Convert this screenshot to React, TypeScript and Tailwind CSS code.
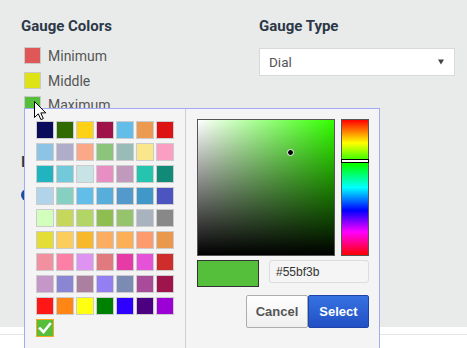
import React from 'react';

const palette: string[] = [
  '#0b0b5c', '#316b00', '#fdd116', '#a0134a', '#62bee9', '#ec9a4f', '#dd1212',
  '#8dc3e4', '#b0adca', '#fba888', '#8cc47b', '#9abcb9', '#fae78c', '#fa9fc1',
  '#21b4c0', '#72c9da', '#c8e3e6', '#e78ec3', '#c199bd', '#25c4ae', '#128a78',
  '#b1d4ea', '#86d0c2', '#63bde9', '#58aedb', '#5399cc', '#3f98c8', '#4c55bf',
  '#d3ffbc', '#c6d85b', '#b2d665', '#8ebe4f', '#95c46d', '#a8b3bf', '#888888',
  '#e3dd35', '#fccd5b', '#f7b92b', '#fdad62', '#fcaf55', '#fd9a6e', '#ea984c',
  '#f1909f', '#fc80a6', '#de93f1', '#e07a7e', '#e63ba6', '#e652d7', '#cf2c2c',
  '#c597c8', '#8b86d3', '#aa7fa0', '#937ff2', '#7b8bb3', '#a84b98', '#a0144c',
  '#ff1717', '#ff8514', '#ffff12', '#008000', '#2d00ff', '#4b0081', '#9b00d4',
];

const gaugeColors = [
  { label: 'Minimum', color: '#e05757' },
  { label: 'Middle', color: '#dee316' },
  { label: 'Maximum', color: '#55bf3b' },
];

const App: React.FC = () => {
  return (
    <div className="relative w-[467px] h-[348px] overflow-hidden bg-white font-['Roboto',sans-serif]">
      {/* Settings form */}
      <div className="h-[327px] bg-[#e9ebea] flex pl-[21px] pt-[16px]">
        <div className="w-[238px]">
          <h2 className="text-[15px] leading-[20px] font-bold text-[#2c3848]">Gauge Colors</h2>
          <div className="mt-[11px] flex flex-col gap-[7.5px]">
            {gaugeColors.map((g) => (
              <div key={g.label} className="h-[17px] flex items-center gap-[7px] pl-[3px]">
                <span className="w-[17px] h-[17px] border border-[#c9c9c9]" style={{ backgroundColor: g.color }} />
                <span className="pt-[2px] text-[14px] text-[#555]">{g.label}</span>
              </div>
            ))}
          </div>
          <h2 className="mt-[39px] text-[15px] leading-[20px] font-bold text-[#2c3848]">Interval</h2>
          <div className="mt-[13px] flex items-center gap-2">
            <span className="w-[12px] h-[12px] rounded-full bg-[#1d4ba0]" />
            <span className="text-[13px] text-[#555]">Auto</span>
          </div>
        </div>

        <div className="w-[196px]">
          <h2 className="text-[15px] leading-[20px] font-bold text-[#2c3848]">Gauge Type</h2>
          <div className="mt-[12px] h-[28px] bg-white border border-[#d9d9d9] flex items-center justify-between pl-[9px] pr-[10px]">
            <span className="text-[13.5px] text-[#555]">Dial</span>
            <svg width="6" height="6" viewBox="0 0 6 6">
              <polygon points="0,0.5 6,0.5 3,5.5" fill="#444" />
            </svg>
          </div>
        </div>
      </div>
      <div className="mt-[7px] border-t border-[#e6e6e6]" />

      {/* Colour picker popup */}
      <div className="absolute left-[24px] top-[108px] w-[356px] h-[250px] border border-[#a0aaf5] bg-[#f4f4f4] flex font-['Liberation_Sans',Arial,sans-serif]">
        <div className="w-[161px] border-r border-[#cfcfcf] pl-[11px] pt-[12px]">
          <div className="grid grid-cols-[repeat(7,18px)] gap-x-[2px] gap-y-[4px]">
            {palette.map((c, i) => (
              <span key={i} className="w-[18px] h-[18px] border border-[#cccccc]" style={{ backgroundColor: c }} />
            ))}
            <span className="w-[18px] h-[18px] border border-[#f5a623] bg-[#55bf3b] flex items-center justify-center">
              <svg width="14" height="14" viewBox="0 0 14 14">
                <path d="M2 7.5 L5.5 11 L12 3" fill="none" stroke="white" strokeWidth="2.6" strokeLinecap="square" />
              </svg>
            </span>
          </div>
        </div>

        <div className="pl-[11px] pt-[10px]">
          <div className="flex gap-[6px]">
            <div className="relative w-[138px] h-[137px] border border-[#555] bg-[#33ff00]">
              <div className="absolute inset-0 bg-linear-to-r from-white to-transparent" />
              <div className="absolute inset-0 bg-linear-to-b from-transparent to-black" />
              <span className="absolute left-[89px] top-[29px] w-[7px] h-[7px] rounded-full bg-black border border-white" />
            </div>
            <div className="relative w-[28px] h-[137px] border border-[#555] bg-[linear-gradient(to_bottom,#f00_0%,#ff0_17%,#0f0_33%,#0ff_50%,#00f_67%,#f0f_83%,#f00_100%)]">
              <span className="absolute left-[-1px] right-[-1px] top-[39px] h-[4px] bg-white border border-black" />
            </div>
          </div>
          <div className="mt-[4px] flex gap-[10px]">
            <div className="w-[62px] h-[27px] border border-[#333] bg-[#55bf3b]" />
            <div className="w-[100px] h-[23px] border border-[#dcdcdc] rounded-[3px] bg-[#f5f5f5] flex items-center pl-[6px] text-[12px] text-[#333]">
              #55bf3b
            </div>
          </div>
          <div className="mt-[8px] w-[172px] flex justify-end">
            <button className="w-[62px] h-[33px] border border-[#adadad] rounded-[2px] bg-linear-to-b from-white to-[#efefef] text-[13px] font-bold text-[#555]">
              Cancel
            </button>
            <button className="w-[61px] h-[33px] border border-[#1f44a8] rounded-[2px] bg-linear-to-b from-[#3572e2] to-[#2250c4] text-[13px] font-bold text-white">
              Select
            </button>
          </div>
        </div>
      </div>

      {/* Mouse pointer */}
      <svg className="absolute left-[34px] top-[101px]" width="13" height="20" viewBox="0 0 13 20">
        <path d="M0.5 0.5 L0.5 16.5 L4.3 12.8 L6.9 18.6 L9.3 17.6 L6.8 11.9 L11.8 11.9 Z" fill="white" stroke="black" strokeWidth="1" strokeLinejoin="miter" />
      </svg>
    </div>
  );
};

export default App;
